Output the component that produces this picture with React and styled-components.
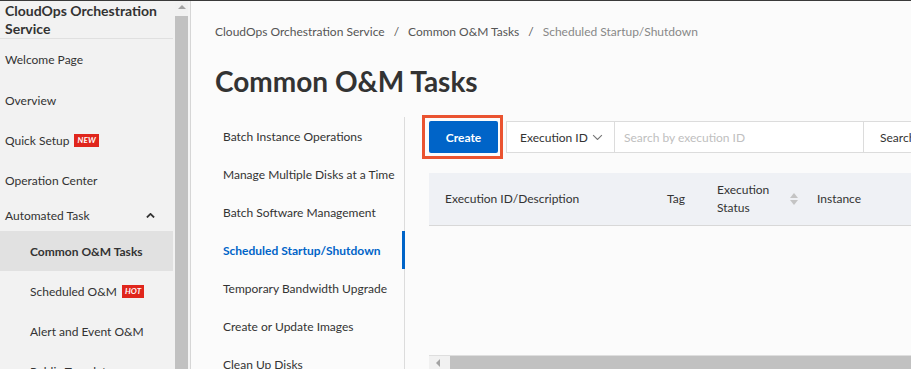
import styled, { createGlobalStyle } from "styled-components";

const GlobalStyle = createGlobalStyle`
  html, body {
    margin: 0;
    padding: 0;
    background: #fafafa;
    font-family: "Lato", "Liberation Sans", sans-serif;
    color: #333;
  }
`;

const Frame = styled.div`
  display: flex;
  height: 369px;
  width: 911px;
  overflow: hidden;
  box-sizing: border-box;
  border-top: 1px solid #3a3a3a;
`;

const Sidebar = styled.div`
  width: 175px;
  flex-shrink: 0;
  background: #f2f2f2;
  display: flex;
  flex-direction: column;
  overflow: hidden;
`;

const SideTitle = styled.div`
  flex-shrink: 0;
  padding: 1px 0 0 5px;
  height: 36px;
  font-size: 14px;
  font-weight: 700;
  line-height: 18px;
  border-bottom: 1px solid #e0e0e0;
  margin-right: 2px;
`;

const SideItem = styled.div`
  flex-shrink: 0;
  display: flex;
  align-items: center;
  height: ${(p) => p.$h || 40}px;
  padding-left: ${(p) => (p.$sub ? 30 : 5)}px;
  padding-right: 18px;
  font-size: 12px;
  font-weight: ${(p) => (p.$active ? 700 : 400)};
  background: ${(p) => (p.$active ? "#e1e1e1" : "transparent")};
  margin-right: 2px;
  gap: 5px;
  white-space: nowrap;
`;

const Grow = styled.span`
  flex: 1;
`;

const Badge = styled.span`
  background: #e0261c;
  color: #fff;
  font-size: 8px;
  font-weight: 700;
  font-style: italic;
  padding: 1px 3px;
  line-height: 11px;
  letter-spacing: 0.2px;
`;

const VScroll = styled.div`
  width: 13px;
  flex-shrink: 0;
  background: #f1f1f1;
  display: flex;
  flex-direction: column;
  align-items: center;
`;

const ArrowUp = styled.div`
  margin-top: 4px;
  width: 0;
  height: 0;
  border-left: 4px solid transparent;
  border-right: 4px solid transparent;
  border-bottom: 4px solid #a3a3a3;
`;

const VThumb = styled.div`
  margin-top: 7px;
  width: 13px;
  flex: 1;
  background: #c1c1c1;
`;

const Gutter = styled.div`
  width: 2px;
  flex-shrink: 0;
  background: #f4f4f4;
  border-right: 1px solid #d6d6d6;
`;

const Main = styled.div`
  flex: 1;
  min-width: 0;
  padding-left: 24px;
  background: #fbfbfb;
`;

const Breadcrumb = styled.div`
  margin-top: 21px;
  height: 18px;
  display: flex;
  align-items: center;
  gap: 9px;
  font-size: 12px;
  color: #555;
  white-space: nowrap;
`;

const Crumb = styled.span`
  color: ${(p) => (p.$last ? "#888" : "#555")};
`;

const Title = styled.h1`
  margin: 22px 0 0;
  height: 38px;
  font-size: 28px;
  font-weight: 700;
  line-height: 38px;
  color: #333;
  white-space: nowrap;
`;

const Body = styled.div`
  margin-top: 17px;
  display: flex;
  gap: 24px;
`;

const SubNav = styled.div`
  width: 189px;
  flex-shrink: 0;
  border-right: 1px solid #dcdcdc;
  height: 260px;
`;

const SubItem = styled.div`
  height: 38px;
  display: flex;
  align-items: center;
  padding-left: 8px;
  font-size: 12px;
  white-space: nowrap;
  color: ${(p) => (p.$active ? "#0064c8" : "#333")};
  font-weight: ${(p) => (p.$active ? 700 : 400)};
  box-shadow: ${(p) => (p.$active ? "inset -3px 0 0 #0064c8" : "none")};
  margin-right: -1px;
`;

const Content = styled.div`
  flex: 1;
  min-width: 0;
  display: flex;
  flex-direction: column;
`;

const Toolbar = styled.div`
  margin-top: 4px;
  display: flex;
  align-items: center;
  height: 32px;
  & > * {
    flex-shrink: 0;
  }
`;

const Highlight = styled.div`
  border: 3px solid #ea5330;
  padding: 3px 2px 3px 4px;
  margin: -6px 3px -6px -7px;
  display: flex;
`;

const PrimaryButton = styled.button`
  width: 69px;
  height: 32px;
  border: none;
  border-radius: 2px;
  background: #0064c8;
  color: #fff;
  font-family: inherit;
  font-size: 12px;
  font-weight: 700;
`;

const Select = styled.div`
  width: 109px;
  height: 32px;
  box-sizing: border-box;
  border: 1px solid #dcdcdc;
  display: flex;
  align-items: center;
  justify-content: space-between;
  padding: 0 11px 0 13px;
  font-size: 12px;
  background: #fff;
  white-space: nowrap;
`;

const SearchInput = styled.div`
  width: 249px;
  height: 32px;
  box-sizing: border-box;
  border: 1px solid #dcdcdc;
  border-left: none;
  display: flex;
  align-items: center;
  padding-left: 9px;
  font-size: 12px;
  color: #c0c0c0;
  background: #fff;
  white-space: nowrap;
`;

const SearchButton = styled.div`
  width: 80px;
  height: 32px;
  box-sizing: border-box;
  border: 1px solid #dcdcdc;
  border-left: none;
  display: flex;
  align-items: center;
  padding-left: 16px;
  font-size: 12px;
  background: #fff;
`;

const TableHead = styled.div`
  margin-top: 20px;
  height: 52px;
  background: #eff1f5;
  border-bottom: 1px solid #d8d8d8;
  display: grid;
  grid-template-columns: 222px 50px 100px 120px;
  align-items: center;
  font-size: 12px;
  padding-left: 16px;
  white-space: nowrap;
`;

const HeadCell = styled.div`
  display: flex;
  align-items: center;
  line-height: 18px;
  gap: 21px;
`;

const TableBody = styled.div`
  height: 129px;
`;

const HScroll = styled.div`
  height: 13px;
  border-top: 1px solid #dedede;
  background: #f1f1f1;
  display: flex;
  align-items: center;
`;

const ArrowLeft = styled.div`
  margin: 0 10px 0 7px;
  width: 0;
  height: 0;
  border-top: 4px solid transparent;
  border-bottom: 4px solid transparent;
  border-right: 4px solid #a3a3a3;
`;

const HThumb = styled.div`
  flex: 1;
  height: 13px;
  background: #c1c1c1;
`;

const Chevron = ({ dir = "down", color = "#555", w = 10, sw = 1 }) => (
  <svg width={w} height={w * 0.6} viewBox="0 0 10 6" fill="none">
    <polyline
      points={dir === "down" ? "1,1 5,5 9,1" : "1,5 5,1 9,5"}
      stroke={color}
      strokeWidth={sw}
    />
  </svg>
);

const SortIcon = () => (
  <svg width="8" height="12" viewBox="0 0 8 12">
    <polygon points="4,0 8,5 0,5" fill="#c4c4c4" />
    <polygon points="0,7 8,7 4,12" fill="#c4c4c4" />
  </svg>
);

const subItems = [
  "Batch Instance Operations",
  "Manage Multiple Disks at a Time",
  "Batch Software Management",
  "Scheduled Startup/Shutdown",
  "Temporary Bandwidth Upgrade",
  "Create or Update Images",
  "Clean Up Disks",
];

export default function App() {
  return (
    <>
      <GlobalStyle />
      <Frame>
        <Sidebar>
          <SideTitle>
            CloudOps Orchestration
            <br />
            Service
          </SideTitle>
          <SideItem $h={41}>Welcome Page</SideItem>
          <SideItem>Overview</SideItem>
          <SideItem>
            Quick Setup <Badge>NEW</Badge>
          </SideItem>
          <SideItem>Operation Center</SideItem>
          <SideItem $h={31}>
            <Grow>Automated Task</Grow>
            <Chevron dir="up" color="#333" w={9} sw={2} />
          </SideItem>
          <SideItem $sub $active>
            Common O&amp;M Tasks
          </SideItem>
          <SideItem $sub>
            Scheduled O&amp;M <Badge>HOT</Badge>
          </SideItem>
          <SideItem $sub>Alert and Event O&amp;M</SideItem>
          <SideItem $sub>Public Templates</SideItem>
        </Sidebar>
        <VScroll>
          <ArrowUp />
          <VThumb />
        </VScroll>
        <Gutter />
        <Main>
          <Breadcrumb>
            <Crumb>CloudOps Orchestration Service</Crumb>
            <Crumb>/</Crumb>
            <Crumb>Common O&amp;M Tasks</Crumb>
            <Crumb>/</Crumb>
            <Crumb $last>Scheduled Startup/Shutdown</Crumb>
          </Breadcrumb>
          <Title>Common O&amp;M Tasks</Title>
          <Body>
            <SubNav>
              {subItems.map((s, i) => (
                <SubItem key={s} $active={i === 3}>
                  {s}
                </SubItem>
              ))}
            </SubNav>
            <Content>
              <Toolbar>
                <Highlight>
                  <PrimaryButton>Create</PrimaryButton>
                </Highlight>
                <Select>
                  Execution ID
                  <Chevron color="#777" w={11} />
                </Select>
                <SearchInput>Search by execution ID</SearchInput>
                <SearchButton>Search</SearchButton>
              </Toolbar>
              <TableHead>
                <HeadCell>Execution ID/Description</HeadCell>
                <HeadCell>Tag</HeadCell>
                <HeadCell>
                  <span>
                    Execution
                    <br />
                    Status
                  </span>
                  <SortIcon />
                </HeadCell>
                <HeadCell>Instance</HeadCell>
              </TableHead>
              <TableBody />
              <HScroll>
                <ArrowLeft />
                <HThumb />
              </HScroll>
            </Content>
          </Body>
        </Main>
      </Frame>
    </>
  );
}
